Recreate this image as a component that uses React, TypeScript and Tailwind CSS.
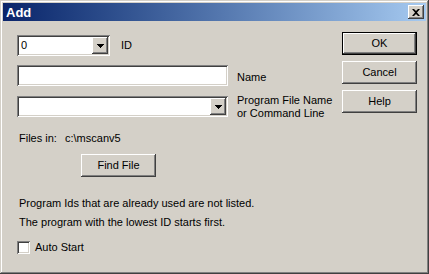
const raised =
  "bg-[#d4d0c8] shadow-[inset_-1px_-1px_#404040,inset_1px_1px_#ffffff,inset_-2px_-2px_#808080,inset_2px_2px_#d4d0c8]"
const sunken =
  "bg-white shadow-[inset_1px_1px_#808080,inset_-1px_-1px_#ffffff,inset_2px_2px_#404040,inset_-2px_-2px_#d4d0c8]"

function Arrow() {
  return (
    <svg width="7" height="4" viewBox="0 0 7 4">
      <path d="M0 0h7v1H0zM1 1h5v1H1zM2 2h3v1H2zM3 3h1v1H3z" fill="#000" />
    </svg>
  )
}

function Combo({ width, value }: { width: string; value?: string }) {
  return (
    <div className={`${sunken} ${width} h-[21px] flex items-center p-[2px]`}>
      <span className="flex-1 pl-[2px] leading-none">{value}</span>
      <div className={`${raised} w-[16px] h-[17px] flex items-center justify-center`}>
        <Arrow />
      </div>
    </div>
  )
}

function Button({ label, isDefault }: { label: string; isDefault?: boolean }) {
  return (
    <div
      className={`w-[75px] h-[23px] flex items-center justify-center ${
        isDefault
          ? "bg-[#d4d0c8] shadow-[inset_0_0_0_1px_#000,inset_-2px_-2px_#404040,inset_2px_2px_#ffffff,inset_-3px_-3px_#808080]"
          : raised
      }`}
    >
      {label}
    </div>
  )
}

export default function App() {
  return (
    <div
      className="w-[429px] h-[274px] bg-[#d4d0c8] text-[11px] text-black p-[3px] shadow-[inset_-1px_-1px_#404040,inset_1px_1px_#d4d0c8,inset_-2px_-2px_#808080,inset_2px_2px_#ffffff] flex flex-col"
      style={{ fontFamily: '"Liberation Sans", Arial, sans-serif' }}
    >
      {/* title bar */}
      <div className="h-[18px] bg-gradient-to-r from-[#0a246a] to-[#a6caf0] flex items-center pl-[3px] pr-[2px]">
        <span className="flex-1 text-white font-bold text-[13px] leading-none">Add</span>
        <div className={`${raised} w-[16px] h-[14px] flex items-center justify-center`}>
          <svg width="8" height="7" viewBox="0 0 8 7">
            <path d="M0 0h2l2 2 2-2h2L5 3.5 8 7H6L4 5 2 7H0l3-3.5z" fill="#000" />
          </svg>
        </div>
      </div>

      {/* body */}
      <div className="flex flex-1">
        <div className="flex flex-col pl-[14px] pt-[14px] w-[335px]">
          <div className="flex items-center">
            <Combo width="w-[93px]" value="0" />
            <span className="ml-[11px]">ID</span>
          </div>

          <div className="flex items-center mt-[9px]">
            <div className={`${sunken} w-[211px] h-[21px]`} />
            <span className="ml-[9px] mt-[4px]">Name</span>
          </div>

          <div className="flex items-start mt-[10px]">
            <Combo width="w-[211px]" />
            <div className="ml-[9px] leading-[13px] -mt-[2px]">
              <div>Program File Name</div>
              <div>or Command Line</div>
            </div>
          </div>

          <div className="flex mt-[12px] pl-[2px] leading-[13px]">
            <span className="w-[46px]">Files in:</span>
            <span>c:\mscanv5</span>
          </div>

          <div className="mt-[9px] ml-[64px]">
            <Button label="Find File" />
          </div>

          <div className="mt-[20px] pl-[2px] leading-[13px]">
            Program Ids that are already used are not listed.
          </div>
          <div className="mt-[6px] pl-[2px] leading-[13px]">
            The program with the lowest ID starts first.
          </div>

          <div className="flex items-center mt-[10px]">
            <div className={`${sunken} w-[13px] h-[13px]`} />
            <span className="ml-[5px]">Auto Start</span>
          </div>
        </div>

        <div className="flex flex-col gap-[6px] pt-[11px] pl-[4px]">
          <Button label="OK" isDefault />
          <Button label="Cancel" />
          <Button label="Help" />
        </div>
      </div>
    </div>
  )
}
